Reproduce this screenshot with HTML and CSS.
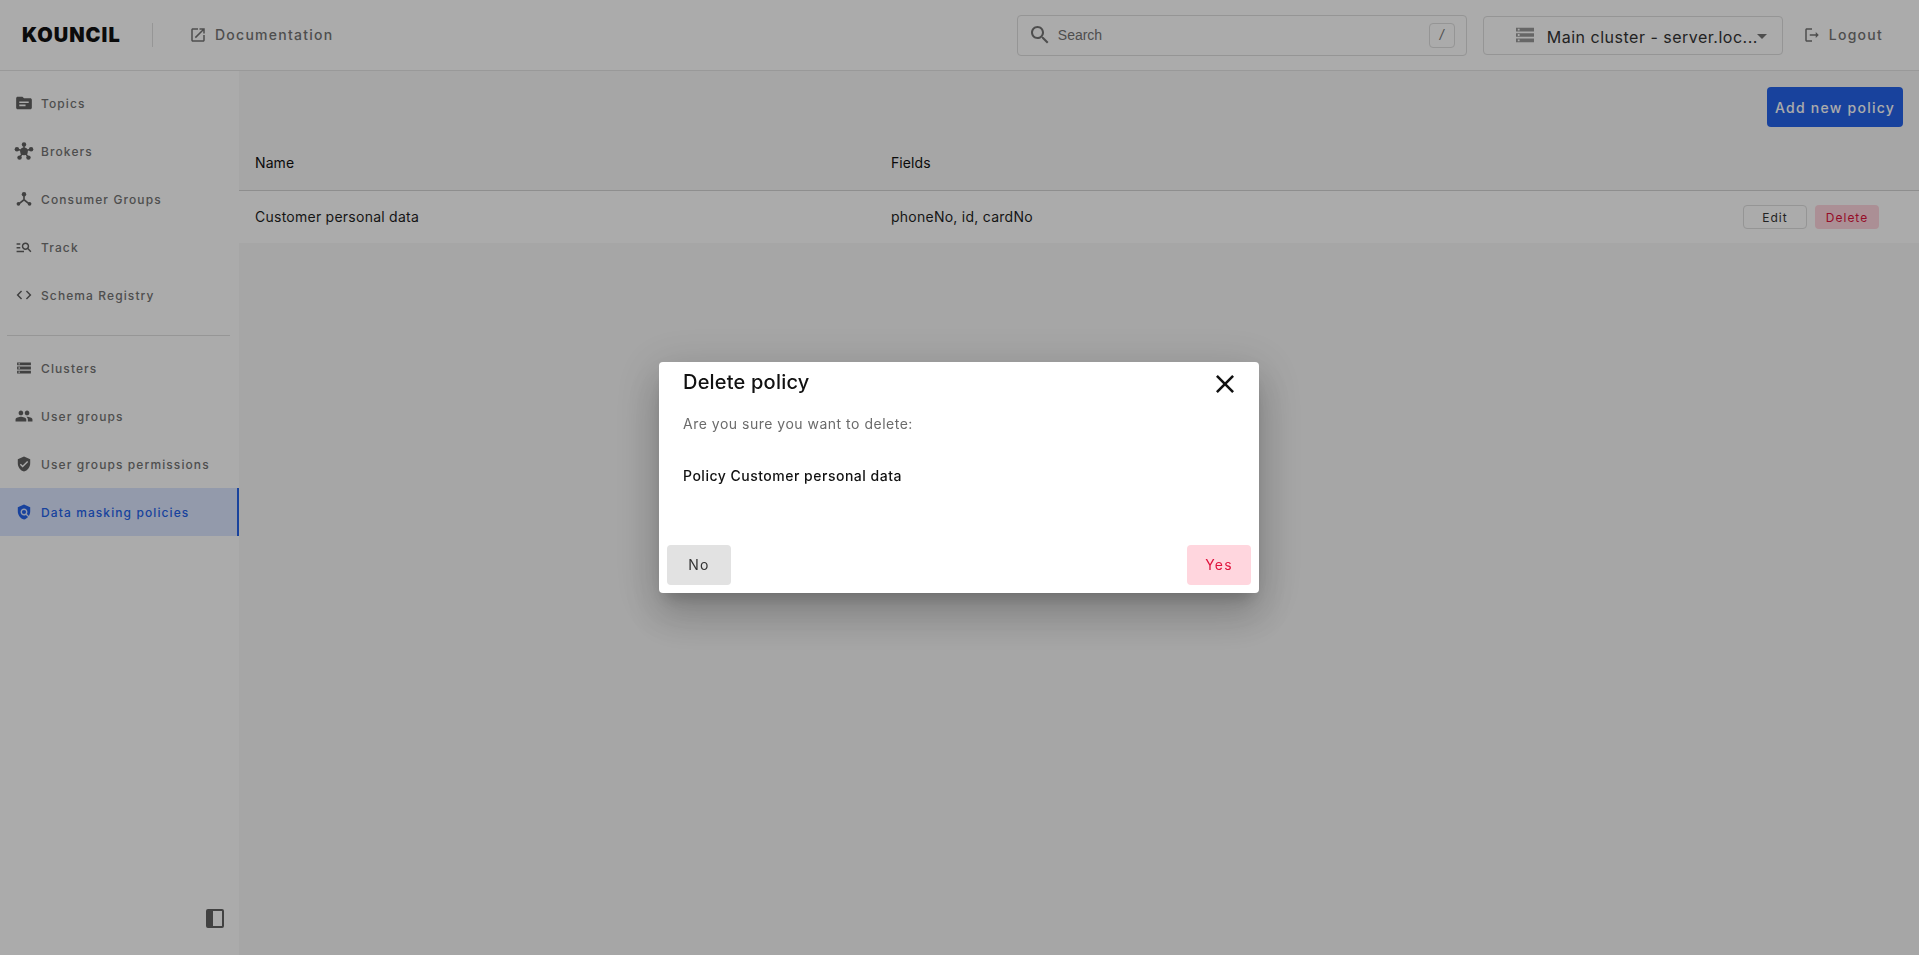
FILE: index.html
```html
<!DOCTYPE html>
<html lang="en">
<head>
  <meta charset="UTF-8" />
  <title>Kouncil - Data masking policies</title>
  <link rel="stylesheet" href="styles.css">
</head>
<body>
  <header class="topbar">
    <div class="logo">KOUNCIL</div>
    <div class="logo-sep"></div>
    <a class="doc-link">
      <svg class="icon icon-doc" viewBox="0 0 24 24"><path d="M19 19H5V5h7V3H5c-1.11 0-2 .9-2 2v14c0 1.1.89 2 2 2h14c1.1 0 2-.9 2-2v-7h-2v7zM14 3v2h3.59l-9.83 9.83 1.41 1.41L19 6.41V10h2V3h-7z"/></svg>
      Documentation
    </a>
    <div class="search">
      <svg class="icon icon-search" viewBox="0 0 24 24"><path d="M15.5 14h-.79l-.28-.27C15.41 12.59 16 11.11 16 9.5 16 5.91 13.09 3 9.5 3S3 5.91 3 9.5 5.91 16 9.5 16c1.61 0 3.09-.59 4.23-1.57l.27.28v.79l5 4.99L20.49 19l-4.99-5zm-6 0C7.01 14 5 11.99 5 9.5S7.01 5 9.5 5 14 7.01 14 9.5 11.99 14 9.5 14z"/></svg>
      <span class="search-text">Search</span>
      <span class="search-key">/</span>
    </div>
    <div class="cluster">
      <svg class="icon icon-cluster" viewBox="2 4 20 16"><path d="M2 20h20v-4H2v4zm2-3h2v2H4v-2zM2 4v4h20V4H2zm4 3H4V5h2v2zm-4 7h20v-4H2v4zm2-3h2v2H4v-2z"/></svg>
      <span class="cluster-name">Main cluster - server.loc...</span>
      <span class="caret"></span>
    </div>
    <a class="logout">
      <svg class="icon icon-logout" viewBox="0 0 24 24"><path d="M5 5h7V3H5c-1.1 0-2 .9-2 2v14c0 1.1.9 2 2 2h7v-2H5V5zm16 7-4-4v3H9v2h8v3l4-4z"/></svg>
      Logout
    </a>
  </header>

  <div class="layout">
    <nav class="sidebar">
      <a class="nav-item">
        <svg class="icon" viewBox="-0.75 -0.75 25.5 25.5"><path d="M20 6h-8l-2-2H4c-1.1 0-1.99.9-1.99 2L2 18c0 1.1.9 2 2 2h16c1.1 0 2-.9 2-2V8c0-1.1-.9-2-2-2zm-6 10H6v-2h8v2zm4-4H6v-2h12v2z"/></svg>
        Topics
      </a>
      <a class="nav-item">
        <svg class="icon" viewBox="-1 -1 26 26"><circle cx="12" cy="12.5" r="5"/><circle cx="12" cy="3.4" r="2.9"/><circle cx="2.8" cy="9.8" r="2.9"/><circle cx="21.2" cy="9.8" r="2.9"/><circle cx="6.2" cy="20.6" r="2.9"/><circle cx="17.8" cy="20.6" r="2.9"/><path d="M12 12V4M12 12 3 9.8M12 12l9-2.2M12 12l-5.8 8.6M12 12l5.8 8.6" stroke="currentColor" stroke-width="2"/></svg>
        Brokers
      </a>
      <a class="nav-item">
        <svg class="icon" viewBox="-1.5 -1.5 27 27"><circle cx="12" cy="5.5" r="3"/><circle cx="4.5" cy="18.5" r="2.5"/><circle cx="19.5" cy="18.5" r="2.5"/><path d="M12 6v7M12 13l-7 5.5M12 13l7 5.5" stroke="currentColor" stroke-width="2.2" fill="none"/></svg>
        Consumer Groups
      </a>
      <a class="nav-item">
        <svg class="icon" viewBox="-1.5 -1.5 27 27"><path d="M7 9H2V7h5v2zm0 3H2v2h5v-2zm13.59 7l-3.83-3.83c-.8.52-1.74.83-2.76.83-2.76 0-5-2.24-5-5s2.24-5 5-5 5 2.24 5 5c0 1.02-.31 1.96-.83 2.75L22 17.59 20.59 19zM17 11c0-1.65-1.35-3-3-3s-3 1.35-3 3 1.35 3 3 3 3-1.35 3-3zM2 19h10v-2H2v2z"/></svg>
        Track
      </a>
      <a class="nav-item">
        <svg class="icon" viewBox="-1.5 -1.5 27 27"><path d="M9.4 16.6 4.8 12l4.6-4.6L8 6l-6 6 6 6 1.4-1.4zm5.2 0 4.6-4.6-4.6-4.6L16 6l6 6-6 6-1.4-1.4z"/></svg>
        Schema Registry
      </a>
      <div class="nav-sep"></div>
      <a class="nav-item">
        <svg class="icon" viewBox="-2.5 -2.5 29 29"><path d="M2 20h20v-4H2v4zm2-3h2v2H4v-2zM2 4v4h20V4H2zm4 3H4V5h2v2zm-4 7h20v-4H2v4zm2-3h2v2H4v-2z"/></svg>
        Clusters
      </a>
      <a class="nav-item">
        <svg class="icon" viewBox="-1 -1 26 26"><path d="M16 11c1.66 0 2.99-1.34 2.99-3S17.66 5 16 5c-1.66 0-3 1.34-3 3s1.34 3 3 3zm-8 0c1.66 0 2.99-1.34 2.99-3S9.66 5 8 5C6.34 5 5 6.34 5 8s1.34 3 3 3zm0 2c-2.33 0-7 1.17-7 3.5V19h14v-2.5c0-2.33-4.67-3.5-7-3.5zm8 0c-.29 0-.62.02-.97.05 1.16.84 1.97 1.97 1.97 3.45V19h6v-2.5c0-2.33-4.67-3.5-7-3.5z"/></svg>
        User groups
      </a>
      <a class="nav-item">
        <svg class="icon" viewBox="-2.5 -2.5 29 29"><path d="M12 1 3 5v6c0 5.55 3.84 10.74 9 12 5.16-1.26 9-6.45 9-12V5l-9-4zm-2 16-4-4 1.41-1.41L10 14.17l6.59-6.59L18 9l-8 8z"/></svg>
        User groups permissions
      </a>
      <a class="nav-item active">
        <svg class="icon" viewBox="-2.5 -2.5 29 29"><path d="M21 5l-9-4-9 4v6c0 5.55 3.84 10.74 9 12 2.3-.56 4.33-1.9 5.88-3.71l-3.12-3.12c-1.94 1.29-4.58 1.07-6.29-.64-1.95-1.95-1.95-5.12 0-7.07 1.95-1.95 5.12-1.95 7.07 0 1.71 1.71 1.92 4.35.64 6.29l2.9 2.9C20.29 15.69 21 13.38 21 11V5z"/><circle cx="12" cy="12" r="3"/></svg>
        Data masking policies
      </a>
      <div class="sidebar-foot">
        <span class="collapse-btn"><span class="collapse-fill"></span></span>
      </div>
    </nav>

    <main class="content">
      <div class="toolbar">
        <button class="btn-primary">Add new policy</button>
      </div>
      <div class="table-head">
        <div class="col-name">Name</div>
        <div class="col-fields">Fields</div>
      </div>
      <div class="table-row">
        <div class="col-name">Customer personal data</div>
        <div class="col-fields">phoneNo, id, cardNo</div>
        <div class="col-actions">
          <button class="btn-small btn-edit">Edit</button>
          <button class="btn-small btn-delete">Delete</button>
        </div>
      </div>
    </main>
  </div>

  <div class="overlay">
    <div class="dialog">
      <div class="dialog-head">
        <h2>Delete policy</h2>
        <svg class="dialog-close" viewBox="5 5 14 14"><path d="M19 6.41 17.59 5 12 10.59 6.41 5 5 6.41 10.59 12 5 17.59 6.41 19 12 13.41 17.59 19 19 17.59 13.41 12 19 6.41z"/></svg>
      </div>
      <p class="dialog-question">Are you sure you want to delete:</p>
      <p class="dialog-subject">Policy Customer personal data</p>
      <div class="dialog-actions">
        <button class="btn-dialog btn-no">No</button>
        <button class="btn-dialog btn-yes">Yes</button>
      </div>
    </div>
  </div>
</body>
</html>
```

FILE: styles.css
```css
html, body {
  margin: 0;
  padding: 0;
  height: 100%;
  overflow: hidden;
  font-family: 'Inter', sans-serif;
  background-color: #ffffff;
  color: #1f1f1f;
}

.icon {
  width: 20px;
  height: 20px;
  fill: currentColor;
  flex-shrink: 0;
}

/* top bar */
.topbar {
  display: flex;
  align-items: center;
  height: 70px;
  border-bottom: 1px solid #e5e5e5;
  box-sizing: content-box;
}

.logo {
  width: 98px;
  margin-left: 22px;
  font-size: 20px;
  font-weight: 900;
  letter-spacing: 1px;
  color: #111111;
  white-space: nowrap;
}

.logo-sep {
  width: 1px;
  height: 24px;
  margin-left: 32px;
  background-color: #e0e0e0;
}

.doc-link {
  display: flex;
  align-items: center;
  gap: 8px;
  margin-left: 36px;
  margin-top: -1px;
  font-size: 14px;
  font-weight: 500;
  letter-spacing: 1.25px;
  color: #757575;
}

.icon-doc {
  width: 18px;
  height: 18px;
}

.search {
  display: flex;
  align-items: center;
  width: 450px;
  height: 41px;
  margin-left: auto;
  border: 1px solid #dedede;
  border-radius: 4px;
  box-sizing: border-box;
}

.icon-search {
  width: 24px;
  height: 24px;
  margin-left: 10px;
  color: #757575;
}

.search-text {
  margin-left: 6px;
  font-family: 'Liberation Sans', sans-serif;
  font-size: 14px;
  color: #757575;
}

.search-key {
  display: flex;
  align-items: center;
  justify-content: center;
  width: 26px;
  height: 25px;
  margin-left: auto;
  margin-right: 11px;
  border: 1px solid #dedede;
  border-radius: 4px;
  box-sizing: border-box;
  font-family: 'Liberation Sans', sans-serif;
  font-size: 14px;
  font-style: italic;
  color: #757575;
}

.cluster {
  display: flex;
  align-items: center;
  width: 300px;
  height: 39px;
  margin-left: 16px;
  border: 1px solid #dedede;
  border-radius: 4px;
  box-sizing: border-box;
}

.icon-cluster {
  width: 18px;
  height: 16px;
  margin-left: 32px;
  color: #999999;
}

.cluster-name {
  width: 210px;
  margin-left: 13px;
  padding-top: 3px;
  font-size: 16px;
  letter-spacing: 0.5px;
  color: #333333;
  white-space: nowrap;
}

.caret {
  width: 0;
  height: 0;
  margin-top: 3px;
  border-left: 5px solid transparent;
  border-right: 5px solid transparent;
  border-top: 5px solid #757575;
}

.logout {
  display: flex;
  align-items: center;
  gap: 8px;
  margin-left: 20px;
  margin-right: 36px;
  margin-top: -1px;
  font-size: 14px;
  font-weight: 500;
  letter-spacing: 1.25px;
  color: #757575;
}

.icon-logout {
  width: 18px;
  height: 18px;
}

/* page below the top bar */
.layout {
  display: flex;
  height: 884px;
}

.sidebar {
  display: flex;
  flex-direction: column;
  width: 239px;
  padding-top: 8px;
  box-sizing: border-box;
  flex-shrink: 0;
}

.nav-item {
  display: flex;
  align-items: center;
  gap: 7px;
  height: 48px;
  padding-left: 14px;
  flex-shrink: 0;
  font-size: 12px;
  font-weight: 500;
  letter-spacing: 1.1px;
  color: #757575;
  box-sizing: border-box;
}

.nav-item .icon {
  color: #616161;
}

.nav-item.active {
  background-color: #dce6ff;
  border-right: 2px solid #2563eb;
  color: #2563eb;
}

.nav-item.active .icon {
  color: #2563eb;
}

.nav-sep {
  height: 1px;
  margin: 16px 9px 8px 7px;
  background-color: #e0e0e0;
  flex-shrink: 0;
}

.sidebar-foot {
  display: flex;
  justify-content: flex-end;
  margin-top: auto;
  padding: 0 15px 27px 0;
}

.collapse-btn {
  display: flex;
  width: 18px;
  height: 19px;
  border: 2px solid #616161;
  border-radius: 2px;
  box-sizing: border-box;
}

.collapse-fill {
  width: 5px;
  background-color: #616161;
}

.content {
  flex-grow: 1;
  background-color: #f8f8f8;
}

.toolbar {
  display: flex;
  justify-content: flex-end;
  height: 72px;
  padding: 16px 16px 0 0;
  box-sizing: border-box;
}

.btn-primary {
  width: 136px;
  height: 40px;
  border: none;
  border-radius: 4px;
  background-color: #2563eb;
  color: #ffffff;
  font-family: inherit;
  font-size: 14px;
  font-weight: 500;
  letter-spacing: 1.25px;
}

.table-head, .table-row {
  display: flex;
  align-items: center;
  padding-left: 16px;
  font-size: 14px;
  letter-spacing: 0.25px;
}

.table-head {
  height: 39px;
  padding-bottom: 8px;
  border-bottom: 1px solid #d4d4d4;
  font-weight: 400;
  color: #111111;
  letter-spacing: 0.1px;
}

.table-row {
  height: 51px;
  padding-bottom: 1px;
  background-color: #ffffff;
}

.col-name {
  width: 636px;
}

.col-actions {
  display: flex;
  gap: 8px;
  margin-left: auto;
  margin-right: 40px;
  margin-top: 1px;
}

.btn-small {
  width: 64px;
  height: 24px;
  padding: 0;
  border-radius: 4px;
  font-family: inherit;
  font-size: 12px;
  font-weight: 400;
  letter-spacing: 1px;
}

.btn-edit {
  border: 1px solid #dedede;
  background-color: transparent;
  color: #333333;
}

.btn-delete {
  border: none;
  background-color: #ffd6de;
  color: #e0123c;
}

/* delete dialog */
.overlay {
  position: fixed;
  top: 0;
  left: 0;
  right: 0;
  bottom: 0;
  display: flex;
  justify-content: center;
  align-items: flex-start;
  padding-right: 1px;
  background-color: rgba(0, 0, 0, 0.33);
}

.dialog {
  display: flex;
  flex-direction: column;
  width: 600px;
  height: 231px;
  margin-top: 362px;
  padding: 0 8px 8px;
  border-radius: 4px;
  box-sizing: border-box;
  background-color: #ffffff;
  box-shadow: 0 11px 15px -7px rgba(0, 0, 0, 0.2), 0 24px 38px 3px rgba(0, 0, 0, 0.14), 0 9px 46px 8px rgba(0, 0, 0, 0.12);
}

.dialog-head {
  display: flex;
  align-items: center;
  justify-content: space-between;
  height: 40px;
  padding: 0 17px 0 16px;
}

.dialog-head h2 {
  margin: 0;
  font-size: 20px;
  font-weight: 500;
  letter-spacing: 0.2px;
  color: #111111;
}

.dialog-close {
  width: 18px;
  height: 18px;
  margin-top: 4px;
  fill: #111111;
}

.dialog-question {
  margin: 13px 0 0 16px;
  font-size: 14px;
  letter-spacing: 0.5px;
  color: #6b6b6b;
}

.dialog-subject {
  margin: 35px 0 0 16px;
  font-size: 14px;
  font-weight: 500;
  letter-spacing: 0.5px;
  color: #111111;
}

.dialog-actions {
  display: flex;
  justify-content: space-between;
  margin-top: auto;
}

.btn-dialog {
  width: 64px;
  height: 40px;
  padding: 0 0 1px;
  border: none;
  border-radius: 4px;
  font-family: inherit;
  font-size: 14px;
  font-weight: 400;
  letter-spacing: 1.25px;
}

.btn-no {
  background-color: #e2e2e2;
  color: #333333;
}

.btn-yes {
  background-color: #ffd6de;
  color: #e0123c;
}
```
